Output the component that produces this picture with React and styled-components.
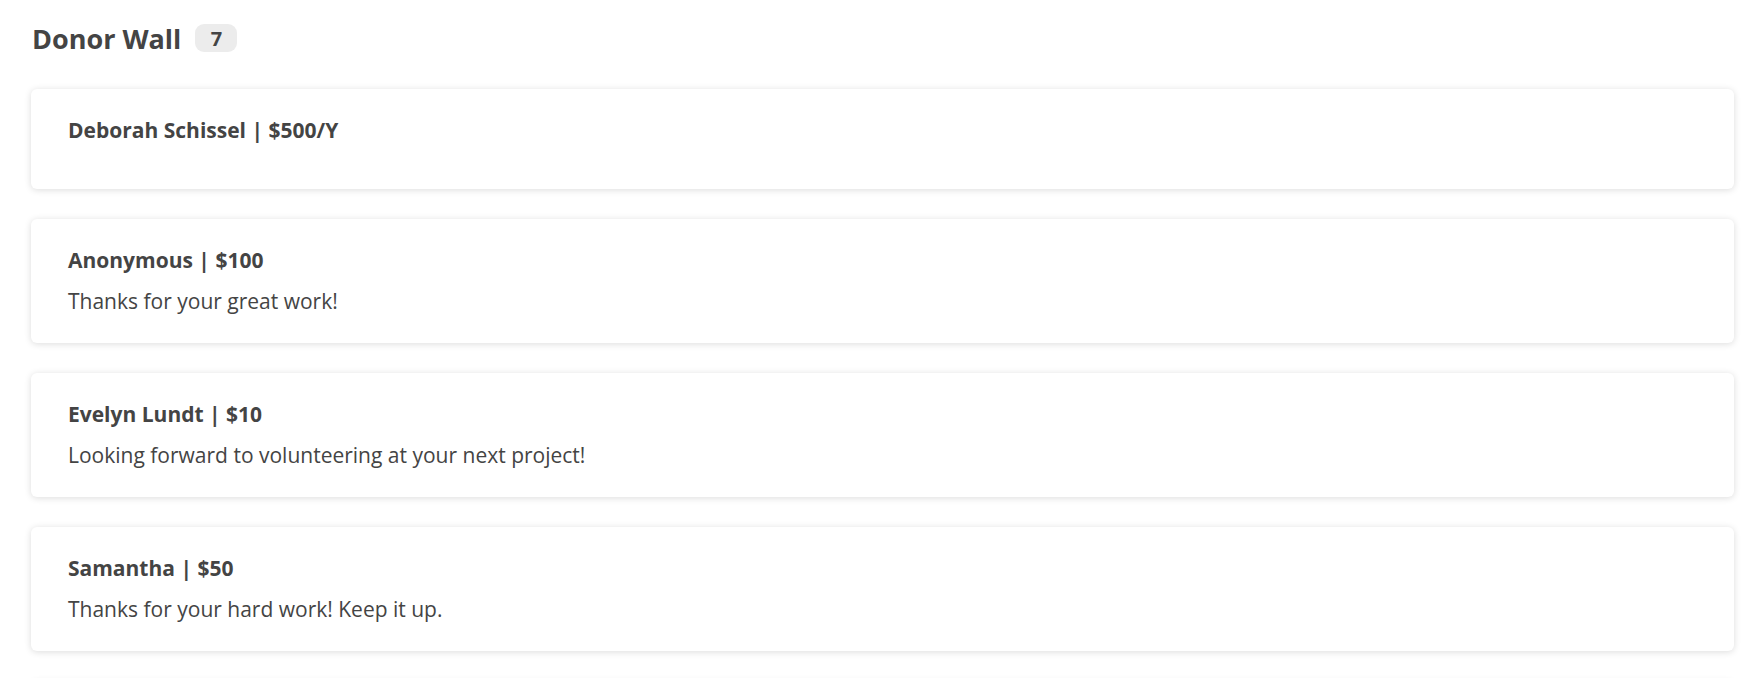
import React from 'react';
import styled, { createGlobalStyle } from 'styled-components';

const GlobalStyle = createGlobalStyle`
  body {
    margin: 0;
    background: #ffffff;
    font-family: "Open Sans", "Noto Sans", sans-serif;
    color: #444444;
  }
`;

const Page = styled.div`
  padding: 18px 23px 0 31px;
`;

const Header = styled.div`
  display: flex;
  align-items: center;
  gap: 14px;
  height: 40px;
  margin-bottom: 31px;
  padding-left: 1px;
`;

const Title = styled.h2`
  margin: 0;
  font-size: 27px;
  font-weight: 700;
  color: #444444;
`;

const Badge = styled.span`
  display: inline-flex;
  align-items: center;
  justify-content: center;
  width: 42px;
  height: 28px;
  border-radius: 9px;
  background: #ececec;
  font-size: 20px;
  font-weight: 700;
  color: #444444;
`;

const List = styled.div`
  display: flex;
  flex-direction: column;
  gap: 30px;
`;

const Card = styled.div`
  background: #ffffff;
  border-radius: 6px;
  box-shadow: 0 1px 7px rgba(0, 0, 0, 0.14);
  padding: 29px 37px 30px;
`;

const Name = styled.div`
  font-size: 21px;
  font-weight: 700;
  line-height: 25px;
`;

const Message = styled.p`
  margin: 16px 0 0;
  font-size: 21px;
  line-height: 24px;
`;

const donors = [
  { name: 'Deborah Schissel', amount: '$500/Y', message: '' },
  { name: 'Anonymous', amount: '$100', message: 'Thanks for your great work!' },
  { name: 'Evelyn Lundt', amount: '$10', message: 'Looking forward to volunteering at your next project!' },
  { name: 'Samantha', amount: '$50', message: 'Thanks for your hard work! Keep it up.' },
  { name: 'Jonathan', amount: '$25', message: 'Keep going!' },
];

export default function App() {
  return (
    <>
      <GlobalStyle />
      <Page>
        <Header>
          <Title>Donor Wall</Title>
          <Badge>7</Badge>
        </Header>
        <List>
          {donors.map((d) => (
            <Card key={d.name}>
              <Name>{d.name} | {d.amount}</Name>
              <Message>{d.message}</Message>
            </Card>
          ))}
        </List>
      </Page>
    </>
  );
}
